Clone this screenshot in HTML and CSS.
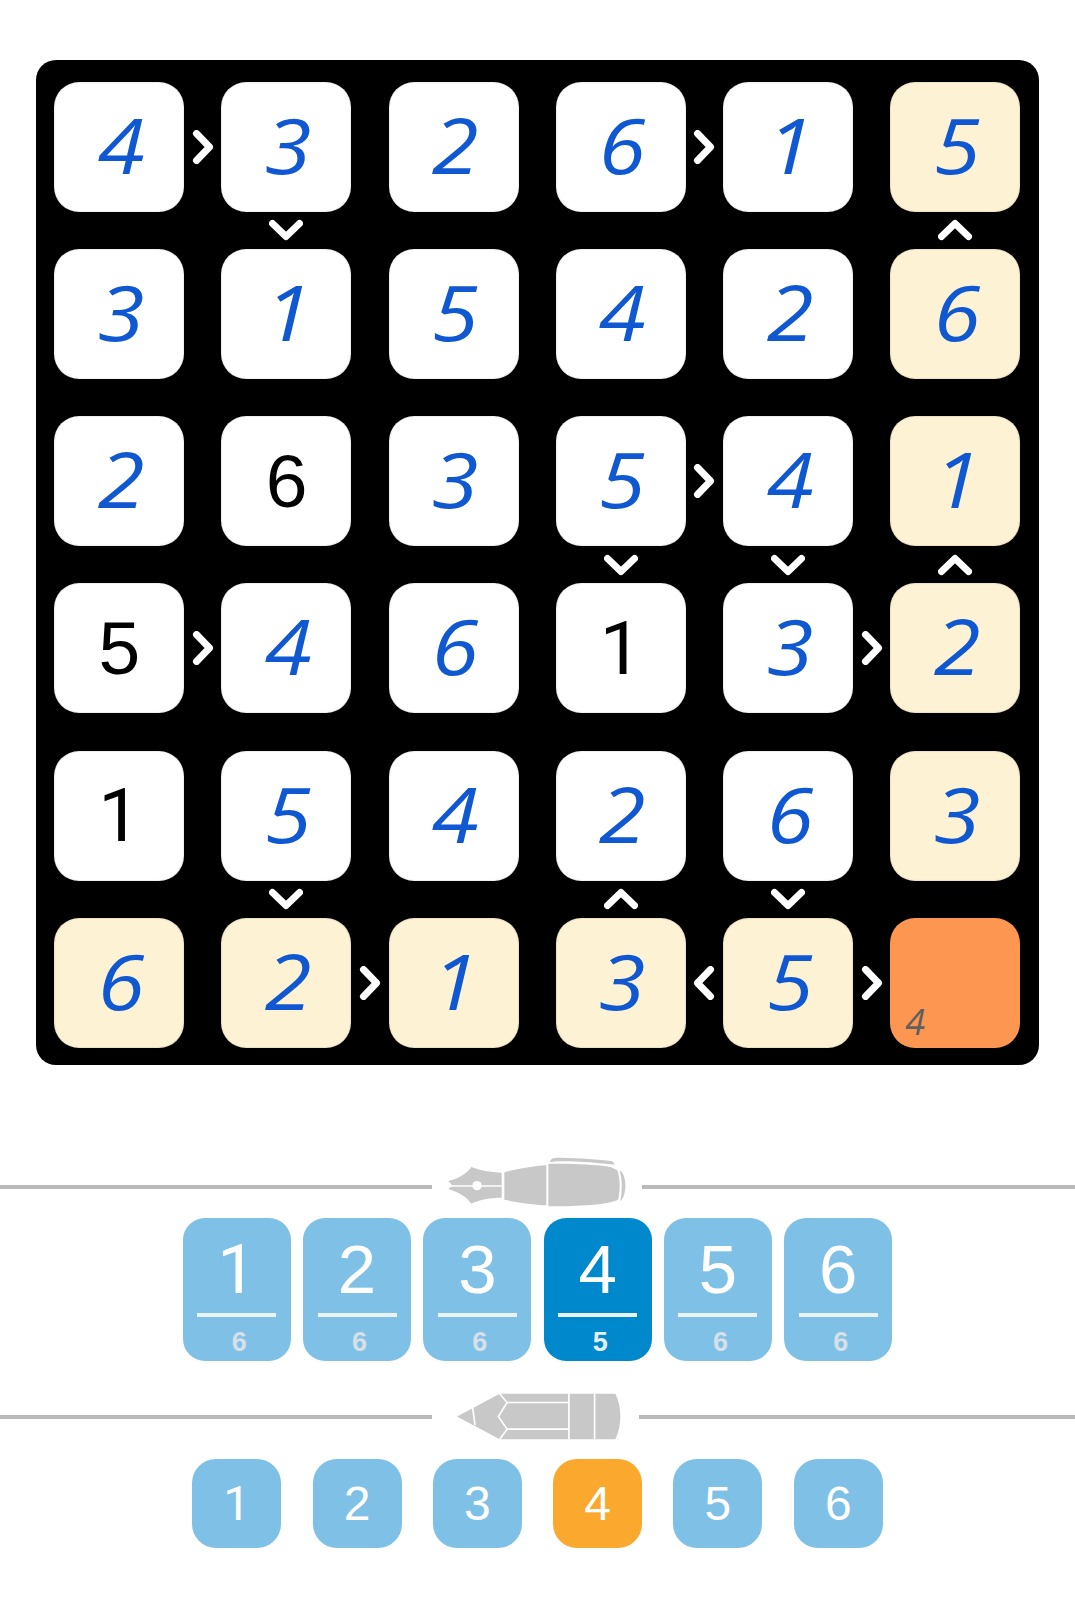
FILE: index.html
```html
<!DOCTYPE html>
<html lang="en">
<head>
<meta charset="utf-8">
<title>Futoshiki</title>
<link rel="stylesheet" href="styles.css">
</head>
<body>
<svg class="defs" width="0" height="0" aria-hidden="true"><defs>
  <symbol id="chev" viewBox="0 0 34 34"><path d="M10.5 3.5 L23.5 17 L10.5 30.5" fill="none" stroke="#fff" stroke-width="7" stroke-linecap="round" stroke-linejoin="round"/></symbol>
</defs></svg>
<main class="board">
  <div class="cell"><span class="v">4</span><svg class="chev right"><use href="#chev"/></svg></div>
  <div class="cell"><span class="v">3</span><svg class="chev down"><use href="#chev"/></svg></div>
  <div class="cell"><span class="v">2</span></div>
  <div class="cell"><span class="v">6</span><svg class="chev right"><use href="#chev"/></svg></div>
  <div class="cell"><span class="v">1</span></div>
  <div class="cell hl"><span class="v">5</span><svg class="chev up"><use href="#chev"/></svg></div>

  <div class="cell"><span class="v">3</span></div>
  <div class="cell"><span class="v">1</span></div>
  <div class="cell"><span class="v">5</span></div>
  <div class="cell"><span class="v">4</span></div>
  <div class="cell"><span class="v">2</span></div>
  <div class="cell hl"><span class="v">6</span></div>

  <div class="cell"><span class="v">2</span></div>
  <div class="cell"><span class="given">6</span></div>
  <div class="cell"><span class="v">3</span></div>
  <div class="cell"><span class="v">5</span><svg class="chev right"><use href="#chev"/></svg><svg class="chev down"><use href="#chev"/></svg></div>
  <div class="cell"><span class="v">4</span><svg class="chev down"><use href="#chev"/></svg></div>
  <div class="cell hl"><span class="v">1</span><svg class="chev up"><use href="#chev"/></svg></div>

  <div class="cell"><span class="given">5</span><svg class="chev right"><use href="#chev"/></svg></div>
  <div class="cell"><span class="v">4</span></div>
  <div class="cell"><span class="v">6</span></div>
  <div class="cell"><span class="given one">1</span></div>
  <div class="cell"><span class="v">3</span><svg class="chev right"><use href="#chev"/></svg></div>
  <div class="cell hl"><span class="v">2</span></div>

  <div class="cell"><span class="given one">1</span></div>
  <div class="cell"><span class="v">5</span><svg class="chev down"><use href="#chev"/></svg></div>
  <div class="cell"><span class="v">4</span></div>
  <div class="cell"><span class="v">2</span><svg class="chev up"><use href="#chev"/></svg></div>
  <div class="cell"><span class="v">6</span><svg class="chev down"><use href="#chev"/></svg></div>
  <div class="cell hl"><span class="v">3</span></div>

  <div class="cell hl"><span class="v">6</span></div>
  <div class="cell hl"><span class="v">2</span><svg class="chev right"><use href="#chev"/></svg></div>
  <div class="cell hl"><span class="v">1</span></div>
  <div class="cell hl"><span class="v">3</span></div>
  <div class="cell hl"><span class="v">5</span><svg class="chev left"><use href="#chev"/></svg><svg class="chev right"><use href="#chev"/></svg></div>
  <div class="cell sel"><span class="note">4</span></div>
</main>

<section class="divider pen-row">
  <span class="rule"></span>
  <svg class="pen" viewBox="145 50 540 150" aria-hidden="true">
    <path d="M146 122 C178 115 200 100 215 80 C240 90 270 96 306 97 V172 C270 172 240 178 215 190 C200 170 178 155 146 147 L158 135 Z"/>
    <path class="cut" d="M146 135 H306 V139 H146 Z"/>
    <circle class="cut" cx="232" cy="136" r="14"/>
    <path d="M314 96 C350 86 400 77 440 75 V195 C400 194 350 186 314 178 Z"/>
    <path d="M446 71 C500 68 580 72 620 78 C640 82 650 88 654 92 C662 120 662 150 655 178 C640 186 600 192 560 195 C520 198 480 198 446 198 Z"/>
    <path d="M660 90 C680 100 685 160 662 183 C668 150 668 120 660 90 Z"/>
    <path d="M452 66 C450 56 460 52 480 52 C540 53 600 58 635 62 C642 64 645 70 642 73 C600 68 530 62 480 63 C465 63 455 65 452 66 Z"/>
  </svg>
  <span class="rule"></span>
</section>

<section class="keys">
  <button class="key"><span class="num one">1</span><span class="count">6</span></button>
  <button class="key"><span class="num">2</span><span class="count">6</span></button>
  <button class="key"><span class="num">3</span><span class="count">6</span></button>
  <button class="key on"><span class="num">4</span><span class="count">5</span></button>
  <button class="key"><span class="num">5</span><span class="count">6</span></button>
  <button class="key"><span class="num">6</span><span class="count">6</span></button>
</section>

<section class="divider pencil-row">
  <span class="rule"></span>
  <svg class="pencil" viewBox="165 70 500 140" aria-hidden="true">
    <path d="M168 140 L296 72 H642 C662 110 662 170 642 208 H296 Z"/>
    <path class="seam" d="M215 114 L222 166 M296 72 L318 98 L292 140 L318 178 L296 208 M318 98 H500 M318 178 H500 M503 72 V208 M580 72 V208"/>
  </svg>
  <span class="rule"></span>
</section>

<section class="notes">
  <button class="nk one">1</button>
  <button class="nk">2</button>
  <button class="nk">3</button>
  <button class="nk on">4</button>
  <button class="nk">5</button>
  <button class="nk">6</button>
</section>
</body>
</html>
```
FILE: styles.css
```css
* { box-sizing: border-box; }
html, body { margin: 0; background: #fff; }
body { height: 1600px; overflow: hidden; font-family: "Liberation Sans", Arial, sans-serif; }
.defs { position: absolute; }

.board {
  width: 1003px;
  height: 1005px;
  margin: 59.5px 0 0 36px;
  padding: 22px 19px 16px 18.3px;
  background: #000;
  border-radius: 20px;
  display: grid;
  grid-template-columns: repeat(6, 130px);
  grid-auto-rows: 130px;
  gap: 37.3px 37.2px;
}
.cell {
  position: relative;
  background: #fff;
  border-radius: 25px;
  box-shadow: inset 0 0 1.5px rgba(0, 0, 0, .35);
  display: flex;
  align-items: center;
  justify-content: center;
}
.cell.hl { background: #fdf2d3; }
.cell.sel { background: #fd9650; box-shadow: none; }

.v {
  display: inline-block;
  font-family: "Open Sans", sans-serif;
  font-style: italic;
  font-size: 76px;
  font-weight: 500;
  line-height: 1;
  color: #0f58d2;
  padding-left: 3px;
  margin-top: -4px;
  transform: scaleX(1.12);
}
.given {
  font-size: 75px;
  line-height: 1;
  color: #000;
}
.given.one { font-family: "Roboto", sans-serif; }
.note {
  position: absolute;
  left: 15px;
  bottom: 8px;
  font-family: "Open Sans", sans-serif;
  font-style: italic;
  font-size: 36px;
  line-height: 1;
  color: #5f5f5f;
}

.chev { position: absolute; width: 34px; height: 34px; }
.chev.right { left: calc(100% + 1.6px); top: 48px; }
.chev.left { right: calc(100% + 1.6px); top: 48px; transform: rotate(180deg); }
.chev.down { top: calc(100% + 1.7px); left: 48px; transform: rotate(90deg); }
.chev.up { top: calc(100% + 1.7px); left: 48px; transform: rotate(-90deg); }

.divider { display: flex; align-items: center; }
.rule { flex: 1; height: 4px; background: #b9b9b9; }
.rule:first-child { flex: 0 0 432px; }
.pen-row { margin-top: 92px; height: 50px; }
.pen-row .rule { position: relative; top: 5px; }
.pen { width: 180px; height: 50px; margin: 0 14px 0 16px; fill: #c8c8c8; }
.pen .cut { fill: #fff; }
.pencil-row { margin-top: 33px; height: 46px; }
.pencil { width: 167px; height: 47px; margin: 0 16px 0 24px; fill: #c8c8c8; }
.pencil .seam { fill: none; stroke: #fff; stroke-width: 5; }

.keys, .notes { display: flex; justify-content: center; gap: 12.3px; }
.keys { margin-top: 11px; }
.key {
  width: 108px;
  height: 143px;
  padding: 0;
  border: 0;
  border-radius: 22px;
  background: #7fc1e6;
  color: #fff;
  font-family: inherit;
  display: flex;
  flex-direction: column;
  align-items: center;
}
.key .num {
  width: 79px;
  height: 99px;
  padding-top: 17px;
  font-size: 69px;
  line-height: 70px;
  border-bottom: 4px solid #e9f3f9;
}
.key .num.one { font-family: "Roboto", sans-serif; }
.key .count {
  margin: 12px 0 0 5px;
  font-size: 27px;
  font-weight: 700;
  line-height: 26px;
  color: #d6e0e8;
}
.key.on { background: #0088cc; }
.key.on .count { color: #e4eef5; }

.notes { margin-top: 19px; gap: 31.3px; }
.nk {
  width: 89px;
  height: 89px;
  padding: 0;
  border: 0;
  border-radius: 24px;
  background: #7fc1e6;
  color: #fff;
  font-family: inherit;
  font-size: 48px;
}
.nk.one { font-family: "Roboto", sans-serif; }
.nk.on { background: #fba92e; }
```
